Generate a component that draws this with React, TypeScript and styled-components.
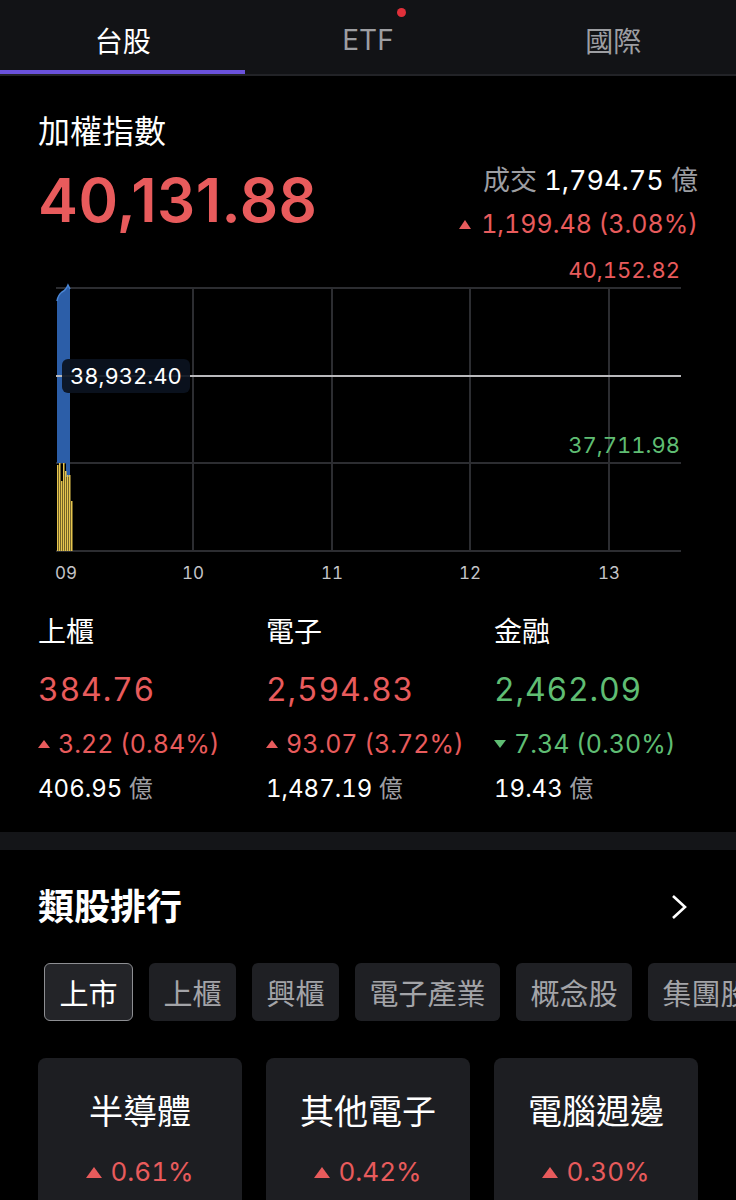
import React from "react";
import styled, { createGlobalStyle } from "styled-components";

const RED = "#e85b5c";
const GREEN = "#5fbd73";
const FONT = `Inter, "Noto Sans CJK TC", sans-serif`;

const GlobalStyle = createGlobalStyle`
  html, body {
    margin: 0;
    padding: 0;
    background: #000;
  }
  body {
    font-family: ${FONT};
    font-variant-numeric: tabular-nums;
    color: #fff;
    width: 736px;
    overflow: hidden;
  }
`;

const TABS = ["台股", "ETF", "國際"];

const SUB_INDICES = [
  { name: "上櫃", value: "384.76", change: "3.22 (0.84%)", up: true, volume: "406.95" },
  { name: "電子", value: "2,594.83", change: "93.07 (3.72%)", up: true, volume: "1,487.19" },
  { name: "金融", value: "2,462.09", change: "7.34 (0.30%)", up: false, volume: "19.43" },
];

const CHIPS = ["上市", "上櫃", "興櫃", "電子產業", "概念股", "集團股"];

const SECTORS = [
  { name: "半導體", pct: "0.61%" },
  { name: "其他電子", pct: "0.42%" },
  { name: "電腦週邊", pct: "0.30%" },
];

// volume bar heights, left to right
const VOLUME_BARS = [86, 88, 70, 88, 80, 76, 76, 50];

export default function App() {
  return (
    <Page>
      <GlobalStyle />
      <TabBar>
        {TABS.map((t, i) => (
          <Tab key={t} $active={i === 0}>
            {t}
            {t === "ETF" && <Dot />}
          </Tab>
        ))}
      </TabBar>

      <IndexSection>
        <IndexTitle>加權指數</IndexTitle>
        <IndexRow>
          <BigValue>40,131.88</BigValue>
          <SideInfo>
            <TurnoverLine>
              <Muted>成交</Muted> 1,794.75 <Muted>億</Muted>
            </TurnoverLine>
            <ChangeLine $up>
              <Arrow $up $size={9} />
              1,199.48 (3.08%)
            </ChangeLine>
          </SideInfo>
        </IndexRow>
      </IndexSection>

      <Chart />

      <SubGrid>
        {SUB_INDICES.map((s) => (
          <SubCol key={s.name}>
            <SubName>{s.name}</SubName>
            <SubValue $up={s.up}>{s.value}</SubValue>
            <SubChange $up={s.up}>
              <Arrow $up={s.up} $size={8} />
              {s.change}
            </SubChange>
            <SubVolume>
              {s.volume} <Muted>億</Muted>
            </SubVolume>
          </SubCol>
        ))}
      </SubGrid>

      <Band />

      <RankHeader>
        <RankTitle>類股排行</RankTitle>
        <svg width="18" height="26" viewBox="0 0 18 26">
          <path d="M3 2 L15 13 L3 24" fill="none" stroke="#fff" strokeWidth="2.6" />
        </svg>
      </RankHeader>

      <ChipRow>
        {CHIPS.map((c, i) => (
          <Chip key={c} $active={i === 0}>
            {c}
          </Chip>
        ))}
      </ChipRow>

      <CardRow>
        {SECTORS.map((s) => (
          <Card key={s.name}>
            <CardTitle>{s.name}</CardTitle>
            <CardPct>
              <Arrow $up $size={11} />
              {s.pct}
            </CardPct>
          </Card>
        ))}
      </CardRow>
    </Page>
  );
}

function Chart() {
  const left = 56;
  const right = 681;
  const cols = [193, 332, 470, 609];
  const rows = [33, 208, 296];
  return (
    <ChartSvg width="736" height="340" viewBox="0 0 736 340">
      <ChartLabel x="680" y="23" fill={RED} textAnchor="end">
        40,152.82
      </ChartLabel>
      {rows.map((y) => (
        <line key={y} x1={left} x2={right} y1={y} y2={y} stroke="#2c2d31" strokeWidth="2" />
      ))}
      {cols.map((x) => (
        <line key={x} x1={x} x2={x} y1={33} y2={296} stroke="#2c2d31" strokeWidth="2" />
      ))}
      <path
        d="M57 212 L57 46 Q58 40 62 37 Q66 35 68 30 L70 34 L70 222 L66 222 L66 208 L57 208 Z"
        fill="#2c5ea8"
      />
      <path d="M57 46 Q58 40 62 37 Q66 35 68 30 L70 34" fill="none" stroke="#4a86d6" strokeWidth="1.5" />
      {VOLUME_BARS.map((h, i) => (
        <rect key={i} x={57 + i * 2} y={296 - h} width="1.5" height={h} fill="#e6c54f" />
      ))}
      <line x1={left} x2={right} y1="121" y2="121" stroke="#b9b9bc" strokeWidth="2" />
      <rect x="62" y="104" width="128" height="34" rx="6" fill="#0b1220" opacity="0.92" />
      <ChartLabel x="70" y="129" fill="#fff">
        38,932.40
      </ChartLabel>
      <ChartLabel x="680" y="198" fill={GREEN} textAnchor="end">
        37,711.98
      </ChartLabel>
      {[
        { x: 66, t: "09" },
        { x: 193, t: "10" },
        { x: 332, t: "11" },
        { x: 470, t: "12" },
        { x: 609, t: "13" },
      ].map((l) => (
        <AxisLabel key={l.t} x={l.x} y="324" textAnchor="middle">
          {l.t}
        </AxisLabel>
      ))}
    </ChartSvg>
  );
}

const Page = styled.div`
  width: 736px;
  min-height: 1200px;
  background: #000;
`;

const TabBar = styled.nav`
  display: grid;
  grid-template-columns: repeat(3, 1fr);
  height: 74px;
  background: #121316;
  border-bottom: 2px solid #222327;
`;

const Tab = styled.div<{ $active: boolean }>`
  position: relative;
  display: flex;
  align-items: center;
  justify-content: center;
  padding-top: 10px;
  font-size: 28px;
  color: ${(p) => (p.$active ? "#ffffff" : "#9d9ea2")};
  border-bottom: 4px solid ${(p) => (p.$active ? "#6a52dc" : "transparent")};
`;

const Dot = styled.span`
  position: absolute;
  top: 8px;
  left: 152px;
  width: 9px;
  height: 9px;
  border-radius: 50%;
  background: #e0303a;
`;

const IndexSection = styled.section`
  padding: 36px 38px 0;
`;

const IndexTitle = styled.h2`
  margin: 0;
  font-size: 32px;
  line-height: 40px;
  font-weight: 400;
  color: #fff;
`;

const IndexRow = styled.div`
  display: flex;
  justify-content: space-between;
  align-items: flex-start;
  margin-top: 12px;
`;

const BigValue = styled.div`
  font-size: 60px;
  line-height: 72px;
  font-weight: 600;
  font-variant-numeric: normal;
  letter-spacing: 0.5px;
  color: ${RED};
`;

const SideInfo = styled.div`
  display: flex;
  flex-direction: column;
  align-items: flex-end;
  gap: 9px;
`;

const TurnoverLine = styled.div`
  font-size: 27px;
  line-height: 34px;
  color: #fff;
`;

const Muted = styled.span`
  color: #9d9ea2;
`;

const ChangeLine = styled.div<{ $up: boolean }>`
  display: flex;
  align-items: center;
  gap: 10px;
  font-size: 25px;
  line-height: 34px;
  color: ${(p) => (p.$up ? RED : GREEN)};
`;

const Arrow = styled.span<{ $up: boolean; $size: number }>`
  display: inline-block;
  width: 0;
  height: 0;
  border-left: ${(p) => p.$size * 0.75}px solid transparent;
  border-right: ${(p) => p.$size * 0.75}px solid transparent;
  ${(p) =>
    p.$up
      ? `border-bottom: ${p.$size}px solid ${RED};`
      : `border-top: ${p.$size}px solid ${GREEN};`}
`;

const ChartSvg = styled.svg`
  display: block;
  margin-top: 14px;
`;

const ChartLabel = styled.text`
  font-family: Inter, sans-serif;
  font-size: 22px;
  font-variant-numeric: tabular-nums;
`;

const AxisLabel = styled.text`
  font-family: Inter, sans-serif;
  font-size: 17px;
  fill: #c4c4c8;
  font-variant-numeric: tabular-nums;
`;

const SubGrid = styled.section`
  display: grid;
  grid-template-columns: repeat(3, 228px);
  padding: 19px 0 0 38px;
`;

const SubCol = styled.div`
  display: flex;
  flex-direction: column;
`;

const SubName = styled.div`
  font-size: 28px;
  line-height: 36px;
  color: #fff;
`;

const SubValue = styled.div<{ $up: boolean }>`
  margin-top: 18px;
  font-size: 32px;
  line-height: 44px;
  letter-spacing: 0.8px;
  color: ${(p) => (p.$up ? RED : GREEN)};
`;

const SubChange = styled.div<{ $up: boolean }>`
  display: flex;
  align-items: center;
  gap: 8px;
  margin-top: 15px;
  font-size: 25px;
  line-height: 34px;
  color: ${(p) => (p.$up ? RED : GREEN)};
`;

const SubVolume = styled.div`
  margin-top: 12px;
  font-size: 24px;
  line-height: 32px;
  color: #fff;
`;

const Band = styled.div`
  height: 18px;
  margin-top: 27px;
  background: #141518;
`;

const RankHeader = styled.div`
  display: flex;
  align-items: center;
  justify-content: space-between;
  padding: 35px 48px 0 38px;
`;

const RankTitle = styled.h2`
  margin: 0;
  font-size: 36px;
  line-height: 44px;
  font-weight: 700;
  color: #fff;
`;

const ChipRow = styled.div`
  display: flex;
  gap: 16px;
  padding-left: 44px;
  margin-top: 34px;
  overflow: hidden;
  white-space: nowrap;
`;

const Chip = styled.div<{ $active: boolean }>`
  flex: none;
  box-sizing: border-box;
  height: 58px;
  padding: 0 ${(p) => (p.$active ? 14.5 : 13.5)}px;
  display: flex;
  align-items: center;
  border-radius: 6px;
  font-size: 29px;
  background: ${(p) => (p.$active ? "#232428" : "#1f2024")};
  color: ${(p) => (p.$active ? "#fff" : "#a3a4a8")};
  border: 1.5px solid ${(p) => (p.$active ? "#8e8f93" : "transparent")};
`;

const CardRow = styled.div`
  display: grid;
  grid-template-columns: repeat(3, 204px);
  gap: 24px;
  padding-left: 38px;
  margin-top: 37px;
`;

const Card = styled.div`
  height: 160px;
  border-radius: 8px;
  background: #1d1e22;
  display: flex;
  flex-direction: column;
  align-items: center;
  padding-top: 34px;
  box-sizing: border-box;
`;

const CardTitle = styled.div`
  font-size: 34px;
  line-height: 40px;
  color: #fff;
`;

const CardPct = styled.div`
  display: flex;
  align-items: center;
  gap: 8px;
  margin-top: 23px;
  font-size: 26px;
  line-height: 34px;
  color: ${RED};
`;
